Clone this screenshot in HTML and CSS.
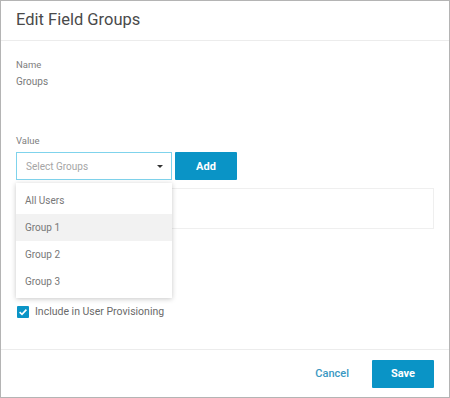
FILE: index.html
```html
<!DOCTYPE html>
<html>
<head>
<meta charset="utf-8">
<link rel="stylesheet" href="styles.css">
</head>
<body>
<div class="dialog">
  <div class="header"><h1 class="title">Edit Field Groups</h1></div>
  <div class="body">
    <div class="label">Name</div>
    <div class="value">Groups</div>
    <div class="label label-value">Value</div>
    <div class="select-row">
      <div class="select-wrap">
        <div class="select">
          <span class="placeholder">Select Groups</span>
          <span class="caret"></span>
        </div>
        <ul class="menu">
          <li class="item">All Users</li>
          <li class="item active">Group 1</li>
          <li class="item">Group 2</li>
          <li class="item">Group 3</li>
        </ul>
      </div>
      <button class="btn btn-add">Add</button>
    </div>
    <div class="list-box"></div>
    <label class="check-row">
      <span class="checkbox">
        <svg width="10" height="10" viewBox="0 0 10 10"><path d="M1.6 5.2 L4 7.4 L8.4 2.6" fill="none" stroke="#fff" stroke-width="1.6"/></svg>
      </span>
      <span class="check-label">Include in User Provisioning</span>
    </label>
  </div>
  <div class="footer">
    <button class="link-btn">Cancel</button>
    <button class="btn btn-save">Save</button>
  </div>
</div>
</body>
</html>
```

FILE: styles.css
```css
* { box-sizing: border-box; }
html, body { margin: 0; padding: 0; background: #fff; }
body { font-family: Roboto, "Liberation Sans", sans-serif; }

.dialog {
  width: 450px;
  height: 398px;
  border: 1px solid #b4b4b4;
  display: flex;
  flex-direction: column;
  background: #fff;
}

.header {
  height: 40px;
  border-bottom: 1px solid #ececec;
  padding-left: 15px;
  display: flex;
  align-items: center;
}
.title {
  margin: 0;
  font-size: 16.5px;
  font-weight: 400;
  color: #4a4a4a;
  line-height: 20px;
  padding-bottom: 1px;
}

.body {
  flex: 1;
  padding: 17px 15px 0 15px;
  border-bottom: 1px solid #ececec;
}

.label {
  font-size: 9.5px;
  color: #808080;
  line-height: 14px;
}
.value {
  font-size: 10px;
  color: #7a7a7a;
  line-height: 14px;
  margin-top: 3px;
}
.label-value { margin-top: 45px; }

.select-row {
  display: flex;
  gap: 3px;
  margin-top: 4px;
}
.select-wrap {
  position: relative;
  width: 156px;
}
.select {
  height: 28px;
  border: 1px solid #7fd3ec;
  display: flex;
  align-items: center;
  justify-content: space-between;
  padding: 0 8px 0 9px;
}
.placeholder {
  font-size: 10px;
  color: #a5a5a5;
}
.caret {
  width: 0;
  height: 0;
  border-left: 3px solid transparent;
  border-right: 3px solid transparent;
  border-top: 3px solid #333;
  margin-top: 1px;
}

.menu {
  position: absolute;
  top: 31px;
  left: 0;
  width: 156px;
  margin: 0;
  padding: 4px 0 3px;
  list-style: none;
  background: #fff;
  box-shadow: 0 1px 5px rgba(0, 0, 0, 0.22);
  z-index: 2;
}
.item {
  height: 27px;
  line-height: 27px;
  padding-left: 9px;
  font-size: 10px;
  color: #777;
}
.item.active { background: #f2f2f2; }

.btn {
  border: none;
  background: #0a94c6;
  color: #fff;
  font-family: Roboto, "Liberation Sans", sans-serif;
  font-weight: 700;
  font-size: 11px;
  height: 28px;
  padding: 0;
  border-radius: 1px;
}
.btn-add { width: 62px; }

.list-box {
  margin-top: 8px;
  height: 41px;
  border: 1px solid #efefef;
  width: 418px;
}

.check-row {
  display: flex;
  align-items: center;
  gap: 6px;
  margin-top: 77px;
  margin-left: 1px;
}
.checkbox {
  width: 12px;
  height: 12px;
  background: #0a94c6;
  border-radius: 1px;
  display: flex;
  align-items: center;
  justify-content: center;
}
.check-label {
  font-size: 10.5px;
  color: #6a6a6a;
  line-height: 12px;
}

.footer {
  height: 47px;
  display: flex;
  align-items: center;
  justify-content: flex-end;
  padding-right: 15px;
}
.link-btn {
  border: none;
  background: none;
  font-family: Roboto, "Liberation Sans", sans-serif;
  font-weight: 500;
  font-size: 11px;
  color: #3a98c2;
  padding: 0;
  margin-right: 23px;
}
.btn-save { width: 62px; }
```
